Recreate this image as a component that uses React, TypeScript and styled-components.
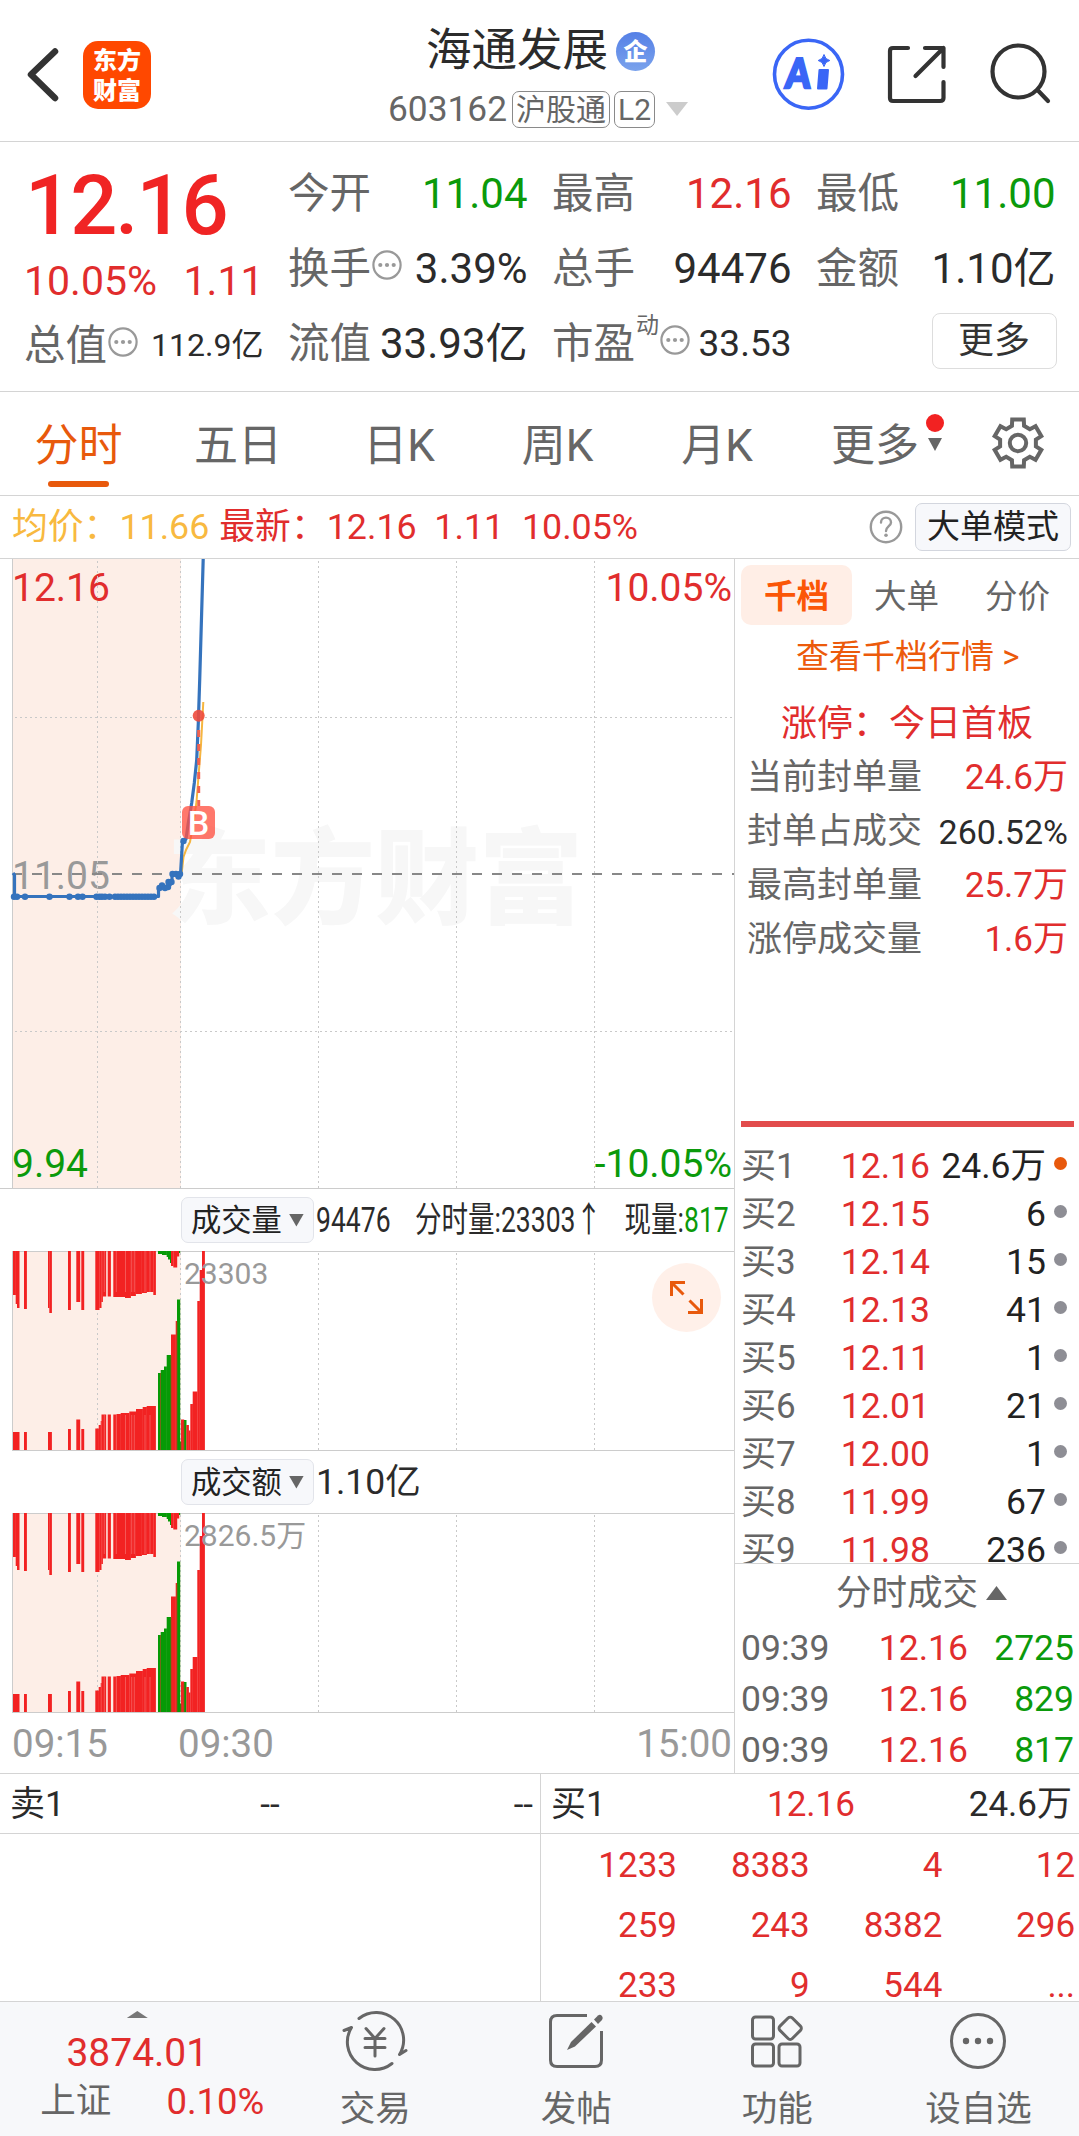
import React from 'react';
import styled, { createGlobalStyle } from 'styled-components';

const RED = '#e12d2d';
const GREEN = '#0b9a0b';
const DARK = '#2b2b2b';
const GRAY = '#666';
const LIGHT = '#999';
const LINE = '#d4d4d4';
const ORANGE = '#e8590c';

const Global = createGlobalStyle`
  * { box-sizing: border-box; }
  body {
    margin: 0;
    background: #fff;
    font-family: Roboto, "Noto Sans CJK SC", sans-serif;
    color: ${DARK};
  }
`;

const Page = styled.div`
  width: 1079px;
  height: 2136px;
  display: flex;
  flex-direction: column;
  overflow: hidden;
  background: #fff;
`;

const Text = styled.span<{ $size: number; $color?: string; $weight?: number; $ml?: number }>`
  font-size: ${p => p.$size}px;
  color: ${p => p.$color || DARK};
  font-weight: ${p => p.$weight || 400};
  margin-left: ${p => p.$ml || 0}px;
  line-height: inherit;
  white-space: pre;
`;

/* ---------- header ---------- */
const Header = styled.header`
  height: 142px;
  flex: none;
  border-bottom: 1px solid ${LINE};
  display: flex;
  align-items: flex-start;
`;
const HeadSide = styled.div`
  display: flex;
  width: 388px;
  height: 141px;
  padding-left: 24px;
`;
const HeadActions = styled.div`
  display: flex;
  margin-left: auto;
  width: 309px;
  height: 141px;
`;
const Logo = styled.div`
  width: 68px;
  height: 68px;
  margin: 41px 0 0 21px;
  border-radius: 15px;
  background: #ff4800;
  color: #fff;
  display: flex;
  flex-direction: column;
  align-items: center;
  padding-top: 3px;
  font: 900 24px/30px "Noto Sans CJK SC", sans-serif;
`;
const TitleBlock = styled.div`
  flex: none;
  width: 310px;
  display: flex;
  flex-direction: column;
`;
const TitleRow = styled.div`
  display: flex;
  align-items: center;
  height: 60px;
  margin-top: 21px;
  padding-left: 38px;
  line-height: 60px;
`;
const Badge = styled.span`
  width: 39px;
  height: 39px;
  margin-left: 8px;
  border-radius: 50%;
  background: linear-gradient(#5580e6, #7aa2ec);
  color: #fff;
  font: 900 24px/36px "Noto Sans CJK SC", sans-serif;
  text-align: center;
`;
const CodeRow = styled.div`
  display: flex;
  align-items: center;
  height: 38px;
  margin-top: 9px;
  line-height: 38px;
`;
const Tag = styled.span<{ $w: number; $ml: number }>`
  width: ${p => p.$w}px;
  margin-left: ${p => p.$ml}px;
  height: 37px;
  border: 1px solid #8a8a8a;
  border-radius: 7px;
  color: ${GRAY};
  font-size: 30px;
  line-height: 35px;
  text-align: center;
  white-space: nowrap;
`;
const Caret = styled.i<{ $w: number; $h: number; $c: string; $up?: boolean; $ml?: number }>`
  flex: none;
  width: ${p => p.$w}px;
  height: ${p => p.$h}px;
  margin-left: ${p => p.$ml || 0}px;
  background: ${p => p.$c};
  clip-path: ${p => (p.$up ? 'polygon(50% 0, 100% 100%, 0 100%)' : 'polygon(0 0, 100% 0, 50% 100%)')};
`;

/* ---------- quote ---------- */
const Quote = styled.section`
  height: 250px;
  flex: none;
  border-bottom: 1px solid ${LINE};
  padding: 14px 0 0 24px;
  display: grid;
  grid-template-columns: repeat(4, 239.5px);
  column-gap: 24.5px;
  align-items: start;
`;
const QuoteCol = styled.div`
  display: flex;
  flex-direction: column;
`;
const QuoteCell = styled.div<{ $h?: number }>`
  height: ${p => p.$h || 75}px;
  line-height: ${p => p.$h || 75}px;
  display: flex;
  justify-content: space-between;
  align-items: center;
`;
const BigPrice = styled.div`
  height: 98px;
  padding-left: 1px;
  font-size: 83px;
  font-weight: 500;
  line-height: 100px;
  color: #f02424;
  letter-spacing: -2px;
`;
const LabelGroup = styled.span`
  display: flex;
  align-items: center;
`;
const Sup = styled.span`
  font-size: 23px;
  line-height: 24px;
  color: ${GRAY};
  margin: -36px 0 0 1px;
`;
const MoreButton = styled.button`
  margin: 7px 0 0 auto;
  position: relative;
  left: 1px;
  align-self: flex-start;
  width: 125px;
  height: 56px;
  border: 1px solid #ddd;
  border-radius: 8px;
  background: #fff;
  font: 400 36px/52px Roboto, "Noto Sans CJK SC", sans-serif;
  color: #333;
  padding: 0;
`;

/* ---------- tabs ---------- */
const Tabs = styled.nav`
  height: 104px;
  flex: none;
  border-bottom: 1px solid ${LINE};
  display: flex;
`;
const Tab = styled.div<{ $w: number; $on?: boolean }>`
  width: ${p => p.$w}px;
  display: flex;
  flex-direction: column;
  align-items: center;
  font-size: 44px;
  line-height: 60px;
  padding-top: 24px;
  color: ${p => (p.$on ? ORANGE : GRAY)};
  &::after {
    content: '';
    width: 61px;
    height: 6px;
    margin-top: 5px;
    border-radius: 3px;
    background: ${p => (p.$on ? ORANGE : 'transparent')};
  }
`;
const TabMore = styled.div`
  width: 130px;
  margin-left: 33px;
  display: flex;
  font-size: 44px;
  line-height: 60px;
  padding-top: 24px;
  color: ${GRAY};
`;
const MoreMarks = styled.span`
  display: flex;
  flex-direction: column;
  align-items: center;
  gap: 6px;
  margin: -2px 0 0 7px;
`;
const RedDot = styled.i`
  width: 18px;
  height: 18px;
  border-radius: 50%;
  background: #f22222;
`;
const GearWrap = styled.div`
  margin: 24px 0 0 30px;
`;

/* ---------- info ---------- */
const InfoBar = styled.div`
  height: 63px;
  flex: none;
  border-bottom: 1px solid ${LINE};
  display: flex;
  align-items: center;
  padding: 0 8px 0 12px;
  line-height: 64px;
`;
const Spacer = styled.div`
  flex: 1;
`;
const ModeButton = styled.button`
  width: 156px;
  height: 48px;
  margin-left: 12px;
  border: 1px solid #d3d6de;
  border-radius: 7px;
  background: #f7f8fb;
  font: 400 33px/46px Roboto, "Noto Sans CJK SC", sans-serif;
  color: #222;
  padding: 0;
`;

/* ---------- main ---------- */
const Main = styled.div`
  display: flex;
  flex: none;
  height: 1215px;
  border-bottom: 1px solid ${LINE};
`;
const ChartCol = styled.div`
  width: 735px;
  flex: none;
  border-right: 1px solid ${LINE};
`;
const ChartBox = styled.div<{ $h: number }>`
  position: relative;
  height: ${p => p.$h}px;
  svg { display: block; }
`;
const Overlay = styled.span<{ $x?: number; $r?: number; $y: number; $size: number; $color: string }>`
  position: absolute;
  ${p => (p.$r !== undefined ? `right: ${p.$r}px;` : `left: ${p.$x}px;`)}
  top: ${p => p.$y - 25}px;
  line-height: 50px;
  font-size: ${p => p.$size}px;
  color: ${p => p.$color};
  white-space: nowrap;
`;
const Watermark = styled.span`
  position: absolute;
  left: 167px;
  top: 252px;
  font: 900 104px/120px "Noto Sans CJK SC", sans-serif;
  color: #f7f7f7;
`;
const BuyMark = styled.span`
  position: absolute;
  left: 182px;
  top: 247px;
  width: 33px;
  height: 33px;
  border-radius: 6px;
  background: rgba(255, 82, 66, 0.78);
  color: #fff;
  font-size: 34px;
  font-weight: 500;
  line-height: 35px;
  text-align: center;
`;
const ExpandButton = styled.button`
  position: absolute;
  left: 652px;
  top: 12px;
  width: 69px;
  height: 69px;
  padding: 0;
  border: 0;
  border-radius: 50%;
  background: #fff0e9;
`;
const SubHead = styled.div<{ $h: number }>`
  height: ${p => p.$h}px;
  padding: 0 0 0 181px;
  display: flex;
  align-items: center;
  line-height: ${p => p.$h + 1}px;
`;
const Selector = styled.div`
  flex: none;
  width: 133px;
  height: 46px;
  border: 1px solid #e2e4ea;
  border-radius: 7px;
  background: #f7f8fb;
  display: flex;
  align-items: center;
  gap: 7px;
  padding-left: 9px;
  font-size: 30.3px;
  line-height: 43px;
  color: #222;
`;
const Condensed = styled.div`
  flex: none;
  width: 546px;
  margin-left: 2px;
  display: flex;
  transform: scaleX(0.758);
  transform-origin: left center;
  font-size: 35px;
  white-space: pre;
`;
const CItem = styled.span<{ $w: number }>`
  width: ${p => p.$w}px;
  flex: none;
`;
const TimeAxis = styled.div`
  display: grid;
  grid-template-columns: 166px 1fr auto;
  padding: 0 2px 0 12px;
  height: 60px;
  line-height: 62px;
`;

/* ---------- side panel ---------- */
const Side = styled.aside`
  width: 344px;
  display: flex;
  flex-direction: column;
`;
const Pills = styled.div`
  display: flex;
  padding: 6px 0 0 6px;
`;
const Pill = styled.div<{ $on?: boolean; $w: number }>`
  width: ${p => p.$w}px;
  height: 60px;
  border-radius: 10px;
  background: ${p => (p.$on ? '#ffeee6' : 'transparent')};
  color: ${p => (p.$on ? '#fb5607' : GRAY)};
  font-size: 32.5px;
  font-weight: ${p => (p.$on ? 700 : 400)};
  line-height: 64px;
  text-align: center;
`;
const DepthLink = styled.div`
  height: 60px;
  line-height: 64px;
  padding-left: 61px;
  font-size: 33px;
  color: #ec5a0b;
  white-space: nowrap;
`;
const LimitTitle = styled.div`
  margin-top: 10px;
  height: 54px;
  line-height: 58px;
  font-size: 36px;
  color: ${RED};
  padding-left: 46px;
`;
const StatRow = styled.div`
  height: 54px;
  line-height: 58px;
  display: flex;
  justify-content: space-between;
  padding: 0 11px 0 12px;
`;
const RedBar = styled.div`
  height: 6px;
  flex: none;
  margin: 156px 5px 0 6px;
  background: #e24c4c;
`;
const Book = styled.div`
  height: 437px;
  flex: none;
  padding-top: 15px;
  overflow: hidden;
  border-bottom: 1px solid ${LINE};
`;
const BookRow = styled.div`
  height: 48px;
  line-height: 49px;
  display: grid;
  grid-template-columns: 70px 119px 116px 20px;
  padding-left: 6px;
  span:nth-child(n + 2) { text-align: right; }
`;
const Dot = styled.i<{ $on?: boolean }>`
  width: 13px;
  height: 13px;
  border-radius: 50%;
  margin: 15px 0 0 8px;
  background: ${p => (p.$on ? ORANGE : '#8e8e95')};
`;
const DealHead = styled.div`
  height: 58px;
  line-height: 59px;
  display: flex;
  align-items: center;
  padding-left: 101px;
  gap: 8px;
`;
const DealRow = styled.div`
  height: 51px;
  line-height: 53px;
  display: grid;
  grid-template-columns: 90px 137px 106px;
  padding-left: 6px;
  span:nth-child(n + 2) { text-align: right; }
`;

/* ---------- depth table ---------- */
const Depth = styled.div`
  height: 228px;
  flex: none;
  display: flex;
  border-bottom: 1px solid ${LINE};
`;
const DepthHalf = styled.div<{ $left?: boolean }>`
  width: ${p => (p.$left ? 541 : 538)}px;
  border-right: ${p => (p.$left ? `1px solid ${LINE}` : 'none')};
  overflow: hidden;
`;
const DepthHead = styled.div`
  height: 60px;
  line-height: 62px;
  border-bottom: 1px solid ${LINE};
  display: grid;
  grid-template-columns: 200px 120px 1fr;
  padding: 0 7px 0 10px;
  span:nth-child(2) { text-align: center; }
  span:nth-child(3) { text-align: right; }
`;
const DepthGrid = styled.div`
  display: grid;
  grid-template-columns: 136px repeat(3, 132.7px);
  grid-auto-rows: 60px;
  line-height: 63px;
  text-align: right;
`;

/* ---------- bottom nav ---------- */
const Nav = styled.footer`
  flex: 1;
  background: #f7f8fa;
  display: flex;
`;
const IndexBlock = styled.div`
  width: 275px;
  display: flex;
  flex-direction: column;
  align-items: center;
  padding-top: 9px;
`;
const IndexValue = styled.div`
  height: 46px;
  line-height: 46px;
  margin-top: 12px;
`;
const IndexRow = styled.div`
  width: 224px;
  height: 50px;
  line-height: 51px;
  display: flex;
  justify-content: space-between;
  margin-left: 30px;
`;
const NavItem = styled.div`
  width: 201.4px;
  padding-top: 8px;
  display: flex;
  flex-direction: column;
  align-items: center;
  line-height: 60px;
  svg { display: block; }
`;
const NavLabel = styled.span`
  margin-top: 7px;
  font-size: 35.5px;
  line-height: 60px;
  color: ${GRAY};
`;

const BackIcon = () => (
  <svg width="38" height="141" viewBox="24 0 38 141" fill="none">
    <path d="M55 51.5 L31 74.5 L55 98" stroke="#333" strokeWidth="6.5" strokeLinecap="round" strokeLinejoin="round" />
  </svg>
);

const HeadIcons = () => (
  <svg width="309" height="141" viewBox="770 0 309 141" fill="none">
    <circle cx="808.5" cy="74.3" r="34" stroke="#3a66f6" strokeWidth="3.6" />
    <g stroke="#333" strokeWidth="4.2" strokeLinecap="round" strokeLinejoin="round">
      <path d="M908 48 H893 Q890 48 890 51 V98 Q890 101 893 101 H940 Q943.5 101 943.5 98 V82" />
      <path d="M925 48 H943.5 V67 M943.5 48 L915.5 76" />
      <circle cx="1018.5" cy="71.5" r="26" />
      <path d="M1037.5 90 L1048 101" />
    </g>
    <path d="M824 54.5 Q825 59.5 829.8 60.5 Q825 61.5 824 66.5 Q823 61.5 818.2 60.5 Q823 59.5 824 54.5 Z" fill="#3a66f6" stroke="#3a66f6" strokeWidth="1" />
    <path d="M819.5 70 H828 L826.5 88.500 H818 Z" fill="#3a66f6" stroke="#3a66f6" strokeWidth="2" strokeLinejoin="round" />
  </svg>
);
const ActionsInner = styled.div`
  position: relative;
  width: 309px;
  height: 141px;
`;
const AiText = styled.span`
  position: absolute;
  left: 16px;
  top: 53px;
  font: 900 41px/40px Lato, sans-serif;
  color: #3a66f6;
  -webkit-text-stroke: 2.5px #3a66f6;
  transform: scaleX(0.86) skewX(-5deg);
  transform-origin: left center;
`;

const DotsIcon = () => (
  <svg width="30" height="30" viewBox="-15 -15 30 30" fill="none">
    <circle r="13.6" stroke="#999" strokeWidth="2.2" />
    <g fill="#999"><circle cx="-6.7" r="2.1" /><circle r="2.1" /><circle cx="6.7" r="2.1" /></g>
  </svg>
);
const InfoIcon = styled.span<{ $ml?: number }>`
  display: flex;
  margin: -7px 0 0 ${p => p.$ml || 0}px;
`;

const HelpIcon = () => (
  <svg width="34" height="34" viewBox="-17 -17 34 34" fill="none">
    <circle r="15.2" stroke="#999" strokeWidth="2.4" />
    <path d="M-5 -4.5 C-5 -11 5 -11 5 -4.5 C5 -1 0 -0.5 0 4" stroke="#999" strokeWidth="2.4" strokeLinecap="round" />
    <circle cy="8.3" r="1.8" fill="#999" />
  </svg>
);

const gearPath = (() => {
  const pts: string[] = [];
  for (let i = 0; i < 6; i++) {
    const a = (i * 60 - 90) * (Math.PI / 180);
    const at = (r: number, d: number) => `${(r * Math.cos(a + d)).toFixed(2)},${(r * Math.sin(a + d)).toFixed(2)}`;
    pts.push(at(18.2, -0.34), at(24.3, -0.24), at(24.3, 0.24), at(18.2, 0.34));
  }
  return `M${pts.join('L')}Z`;
})();
const GearIcon = () => (
  <svg width="54" height="54" viewBox="-27 -27 54 54" fill="none" stroke="#666" strokeWidth="4">
    <path d={gearPath} strokeLinejoin="miter" />
    <circle r="8.2" />
  </svg>
);

const TradeIcon = () => (
  <svg width="70" height="62" viewBox="-35 -31 70 62" fill="none" stroke="#666" strokeWidth="3" strokeLinecap="round" strokeLinejoin="round">
    <path d="M-16 -22.5 A27.5 27.5 0 0 1 24.5 13.5 L31 9.5" />
    <path d="M17 22.5 A27.5 27.5 0 0 1 -23.5 -13.5 L-31 -10.5" />
    <path d="M-9 -12.5 L0 -2.5 L9 -12.5 M-10 -2.5 H10 M-10 6.5 H10 M0 -2.5 V15" />
  </svg>
);
const PostIcon = () => (
  <svg width="58" height="62" viewBox="-29 -31 58 62" fill="none">
    <path d="M11 -25.5 H-19 Q-25.5 -25.5 -25.5 -19 V19 Q-25.5 25.5 -19 25.5 H19 Q25.5 25.5 25.5 19 V-10" stroke="#666" strokeWidth="3" />
    <path d="M-9 9 L-5 1 L15.5 -19 L20 -14.5 L-1 5.5 Z" fill="#666" />
    <path d="M18 -21.5 L22 -25.5 Q24 -27 26 -25 Q27.5 -23 26 -21 L22 -17 Z" fill="#666" />
  </svg>
);
const ToolsIcon = () => (
  <svg width="58" height="62" viewBox="-29 -31 58 62" fill="none" stroke="#666" strokeWidth="3">
    <rect x="-24.5" y="-24" width="21" height="22" rx="3" />
    <rect x="-24.5" y="3" width="21" height="22" rx="3" />
    <rect x="2" y="3" width="21" height="22" rx="3" />
    <rect x="4.5" y="-21.5" width="17.5" height="17.5" rx="3" transform="rotate(45 13.2 -12.8)" />
  </svg>
);
const MoreIcon = () => (
  <svg width="62" height="62" viewBox="-31 -31 62 62" fill="none">
    <circle r="26.5" stroke="#666" strokeWidth="3" />
    <g fill="#666"><circle cx="-12" r="3.2" /><circle r="3.2" /><circle cx="12" r="3.2" /></g>
  </svg>
);

/* ---------- charts ---------- */
const GRID_X = [97.5, 180.5, 318.5, 456.5, 594.5];

const GridV = ({ y1, y2 }: { y1: number; y2: number }) => (
  <g stroke="#c9c9c9" strokeWidth="1" strokeDasharray="2 3">
    {GRID_X.map(x => <line key={x} x1={x} x2={x} y1={y1} y2={y2} />)}
  </g>
);

const AUCTION_DOTS = [14, 17, 25, 49.5, 69.5, 78, 82.5, 96.5, 99.5, 102, 105, 109.5, 115, 118, 121, 124, 127, 130, 133, 136, 139, 142, 145, 148, 151, 154];

const PriceChart = () => (
  <svg width="734" height="629" viewBox="0 559 734 629" fill="none">
    <GridV y1={561} y2={1188} />
    <g stroke="#c9c9c9" strokeDasharray="2 3">
      <line x1="15" x2="734" y1="717.5" y2="717.5" />
      <line x1="15" x2="734" y1="1031.5" y2="1031.5" />
    </g>
    <line x1="12" x2="734" y1="874" y2="874" stroke="#888" strokeWidth="2" strokeDasharray="10 10" />
    <line x1="12.5" x2="12.5" y1="559" y2="1188" stroke="#ccc" />
    <path d="M181.7 873 L183.5 857 L186 850 L190 842 L193.5 822 L196.5 802 L199 770 L201 745 L203.3 702" stroke="#f5b53f" strokeWidth="2" />
    <path d="M13 873 L14.5 875 V896.5 H158.5 V888 H168 L172 882 V874 H180.5 L182.5 841 L186 839 L188.3 823 L191.7 803 L194.3 783 L196.7 760 L198.3 723 L199.7 680 L203.2 559" stroke="#3573bd" strokeWidth="3.2" strokeLinejoin="round" />
    <g fill="#3573bd">
      {AUCTION_DOTS.map(x => <circle key={x} cx={x} cy="896.7" r="3.2" />)}
      {[[159.5, 888], [162, 885.5], [165, 888], [168, 887], [168.5, 882], [171.5, 882], [172.5, 874], [176, 874], [178.5, 876.5], [180, 874], [183.5, 841]].map(([x, y]) => (
        <circle key={`${x}-${y}`} cx={x} cy={y} r="3.2" />
      ))}
    </g>
    <line x1="198.7" x2="198.7" y1="730" y2="806" stroke="#f2624f" strokeWidth="3" strokeDasharray="7 7" />
    <circle cx="198.7" cy="715.8" r="6" fill="#ee4a3c" fillOpacity="0.9" />
  </svg>
);

type Bar = [number, number, number, 'r' | 'g'];
const R = '#f22222';
const G = '#069a06';

// x start, x end, depth below the top edge
const TOP_BARS: Bar[] = [
  [13, 15.7, 44, 'r'], [15.7, 17, 53, 'r'], [17, 19.3, 57, 'r'], [24, 26.7, 58, 'r'], [48, 49.3, 57, 'r'], [49.3, 51.7, 62, 'r'],
  [68, 70.7, 59, 'r'], [76.3, 80, 51, 'r'], [81.3, 84, 59, 'r'], [95.3, 99.3, 59, 'r'], [99.3, 101.3, 57, 'r'], [101.3, 102.7, 51, 'r'],
  [102.7, 106, 45.5, 'r'], [107.7, 110.7, 45.5, 'r'], [113.3, 125, 46, 'r'], [125, 130.7, 47, 'r'], [130.7, 135.7, 45, 'r'], [135.7, 141.7, 43, 'r'],
  [141.7, 146.7, 42, 'r'], [146.7, 153.3, 41, 'r'], [153.3, 155.7, 44, 'r'], [158, 162, 3, 'g'], [162, 166.7, 4, 'g'], [166.7, 168, 6, 'g'],
  [168, 170, 8.5, 'g'], [170, 171, 12, 'g'], [171, 173.3, 15, 'r'], [173.3, 177, 16.5, 'r'], [177, 179, 5.5, 'r'], [179, 180, 2, 'g'],
];
// x start, x end, height above the bottom edge
const BASE_BARS: Bar[] = [
  [13, 19.3, 18, 'r'], [24, 26.7, 18, 'r'], [48, 51.7, 18, 'r'], [68, 70.7, 21, 'r'], [76.3, 80, 30.5, 'r'], [81.3, 84, 21, 'r'],
  [95.3, 98.7, 21.5, 'r'], [98.7, 100.7, 25, 'r'], [100.7, 101.5, 29, 'r'], [101.5, 106, 35.5, 'r'], [107.7, 110.7, 35.5, 'r'],
  [113.3, 116.7, 35.5, 'r'], [116.7, 120.7, 36, 'r'], [120.7, 129.3, 37, 'r'], [129.3, 136, 38.5, 'r'], [136, 142.7, 41, 'r'],
  [142.7, 146.7, 43, 'r'], [146.7, 155.7, 44, 'r'], [158, 160.7, 77, 'g'], [160.7, 164, 80, 'g'], [164, 166.7, 83.5, 'g'],
  [166.7, 171, 95, 'g'], [171, 175.7, 115.5, 'r'], [175.7, 177, 129, 'r'], [177, 180, 150.5, 'g'], [180, 181, 8.5, 'g'],
  [181, 184, 30.5, 'r'], [184, 186.3, 30, 'g'], [186.3, 188.7, 25, 'r'], [188.7, 190.3, 19.5, 'r'], [190.3, 192.7, 46, 'r'],
  [192.7, 197.3, 58.5, 'r'], [197.3, 199.7, 149, 'r'], [199.7, 202, 180, 'r'], [202, 204.7, 200, 'r'],
];
const AMOUNT_HEIGHTS: Record<number, number> = { 190.3: 43, 192.7: 55, 197.3: 142, 199.7: 176 };
const SEAMS = [104.3, 116.3, 125.5, 131.7, 134.3, 145, 150];

const BarChart = ({ amount }: { amount?: boolean }) => {
  const h = 200;
  return (
    <svg width="734" height={h} viewBox={`0 0 734 ${h}`} fill="none">
      <GridV y1={2} y2={h} />
      <line x1="12.5" x2="12.5" y1="0" y2={h} stroke="#ccc" />
      <line x1="12" x2="734" y1="0.5" y2="0.5" stroke="#ccc" />
      {TOP_BARS.map(([a, b, d, c], i) => <rect key={`t${i}`} x={a} y="0" width={b - a + 0.2} height={d} fill={c === 'r' ? R : G} />)}
      {BASE_BARS.map(([a, b, v, c], i) => {
        const height = (amount && AMOUNT_HEIGHTS[a]) || v;
        return <rect key={`b${i}`} x={a} y={h - 1 - height} width={b - a + 0.2} height={height} fill={c === 'r' ? R : G} />;
      })}
      <g stroke="#fff" strokeOpacity="0.3" strokeWidth="0.8">
        {SEAMS.map(x => <path key={x} d={`M${x} 0 V41 M${x} ${h - 36} V${h - 1}`} />)}
      </g>
      <g stroke="#8a5a1a" strokeOpacity="0.8" strokeWidth="1">
        <path d={`M177 ${h - 129} V${h - 1} M160.5 ${h - 78} V${h - 1} M171 ${h - 95} V${h - 1} M184 ${h - 30} V${h - 1} M181 ${h - 9} V${h - 1}`} />
      </g>
      <line x1="12" x2="734" y1={h - 0.5} y2={h - 0.5} stroke="#ccc" />
    </svg>
  );
};
const Auction = styled.i<{ $h: number }>`
  position: absolute;
  left: 13px;
  top: 0;
  width: 167.5px;
  height: ${p => p.$h}px;
  background: #fdeee7;
`;
const Layer = styled.div`
  position: relative;
`;
const PriceWrap = styled.div`
  height: 630px;
  border-bottom: 1px solid #ccc;
`;

const QuotePair = ({ label, value, color, extra, size = 42 }: { label: string; value: string; color?: string; extra?: React.ReactNode; size?: number }) => (
  <QuoteCell>
    <LabelGroup>
      <Text $size={41.5} $color={GRAY}>{label}</Text>
      {extra}
    </LabelGroup>
    <Text $size={size} $color={color || DARK}>{value}</Text>
  </QuoteCell>
);

const STATS: [string, string, string, number][] = [
  ['当前封单量', '24.6万', RED, 35],
  ['封单占成交', '260.52%', DARK, 34],
  ['最高封单量', '25.7万', RED, 35],
  ['涨停成交量', '1.6万', RED, 35],
];
const BOOK: [string, string][] = [
  ['12.16', '24.6万'], ['12.15', '6'], ['12.14', '15'], ['12.13', '41'], ['12.11', '1'],
  ['12.01', '21'], ['12.00', '1'], ['11.99', '67'], ['11.98', '236'],
];
const DEALS: [string, string, string][] = [
  ['09:39', '12.16', '2725'], ['09:39', '12.16', '829'], ['09:39', '12.16', '817'],
];
const QUEUE = ['1233', '8383', '4', '12', '259', '243', '8382', '296', '233', '9', '544', '...'];

export default function App() {
  return (
    <Page>
      <Global />
      <Header>
        <HeadSide>
          <BackIcon />
          <Logo><span>东方</span><span>财富</span></Logo>
        </HeadSide>
        <TitleBlock>
          <TitleRow>
            <Text $size={45.5}>海通发展</Text>
            <Badge>企</Badge>
          </TitleRow>
          <CodeRow>
            <Text $size={35.3} $color={GRAY}>603162</Text>
            <Tag $w={98} $ml={5}>沪股通</Tag>
            <Tag $w={41} $ml={4}>L2</Tag>
            <Caret $w={22} $h={14} $c="#ccc" $ml={11} />
          </CodeRow>
        </TitleBlock>
        <HeadActions>
          <ActionsInner>
            <HeadIcons />
            <AiText>A</AiText>
          </ActionsInner>
        </HeadActions>
      </Header>

      <Quote>
        <QuoteCol>
          <BigPrice>12.16</BigPrice>
          <QuoteCell $h={54}>
            <Text $size={41} $color={RED}>10.05%</Text>
            <Text $size={41} $color={RED}>1.11</Text>
          </QuoteCell>
          <QuotePair label="总值" value="112.9亿" size={32} extra={<InfoIcon $ml={1}><DotsIcon /></InfoIcon>} />
        </QuoteCol>
        <QuoteCol>
          <QuotePair label="今开" value="11.04" color={GREEN} />
          <QuotePair label="换手" value="3.39%" extra={<InfoIcon $ml={1}><DotsIcon /></InfoIcon>} />
          <QuotePair label="流值" value="33.93亿" />
        </QuoteCol>
        <QuoteCol>
          <QuotePair label="最高" value="12.16" color={RED} />
          <QuotePair label="总手" value="94476" />
          <QuotePair label="市盈" value="33.53" size={37} extra={<><Sup>动</Sup><InfoIcon $ml={1}><DotsIcon /></InfoIcon></>} />
        </QuoteCol>
        <QuoteCol>
          <QuotePair label="最低" value="11.00" color={GREEN} />
          <QuotePair label="金额" value="1.10亿" />
          <MoreButton>更多</MoreButton>
        </QuoteCol>
      </Quote>

      <Tabs>
        <Tab $w={157} $on>分时</Tab>
        <Tab $w={162}>五日</Tab>
        <Tab $w={160}>日K</Tab>
        <Tab $w={157}>周K</Tab>
        <Tab $w={162}>月K</Tab>
        <TabMore>
          更多
          <MoreMarks>
            <RedDot />
            <Caret $w={14} $h={13} $c="#666" />
          </MoreMarks>
        </TabMore>
        <GearWrap><GearIcon /></GearWrap>
      </Tabs>

      <InfoBar>
        <Text $size={35.8} $color="#f8b940">均价：11.66</Text>
        <Text $size={35.8} $color={RED} $ml={10}>最新：12.16  1.11  10.05%</Text>
        <Spacer />
        <HelpIcon />
        <ModeButton>大单模式</ModeButton>
      </InfoBar>

      <Main>
        <ChartCol>
          <PriceWrap>
            <ChartBox $h={629}>
              <Auction $h={629} />
              <Watermark>东方财富</Watermark>
              <Overlay $x={12} $y={29} $size={39} $color={RED}>12.16</Overlay>
              <Overlay $r={2} $y={29} $size={39} $color={RED}>10.05%</Overlay>
              <Overlay $x={12} $y={316.5} $size={39} $color={LIGHT}>11.05</Overlay>
              <Overlay $x={12} $y={604.5} $size={39} $color={GREEN}>9.94</Overlay>
              <Overlay $r={2} $y={604.5} $size={39} $color={GREEN}>-10.05%</Overlay>
              <Layer><PriceChart /></Layer>
              <BuyMark>B</BuyMark>
            </ChartBox>
          </PriceWrap>
          <SubHead $h={62}>
            <Selector>成交量<Caret $w={15} $h={13} $c="#666" /></Selector>
            <Condensed>
              <CItem $w={130.5}>94476</CItem>
              <CItem $w={276.5}>分时量:23303↑</CItem>
              <CItem $w={139}>现量:<Text $size={35} $color={GREEN}>817</Text></CItem>
            </Condensed>
          </SubHead>
          <ChartBox $h={200}>
            <Auction $h={200} />
            <Layer><BarChart /></Layer>
            <Overlay $x={184} $y={23} $size={30} $color={LIGHT}>23303</Overlay>
            <ExpandButton>
              <svg width="69" height="69" viewBox="0 0 69 69" fill="none" stroke={ORANGE} strokeWidth="3">
                <path d="M33 19.5 H19.5 V33 M20 20 L31.5 31.5" />
                <path d="M36 49.5 H49.5 V36 M49 49 L37.5 37.5" />
              </svg>
            </ExpandButton>
          </ChartBox>
          <SubHead $h={62}>
            <Selector>成交额<Caret $w={15} $h={13} $c="#666" /></Selector>
            <Text $size={35.5} $ml={2}>1.10亿</Text>
          </SubHead>
          <ChartBox $h={200}>
            <Auction $h={200} />
            <Layer><BarChart amount /></Layer>
            <Overlay $x={184} $y={23} $size={30} $color={LIGHT}>2826.5万</Overlay>
          </ChartBox>
          <TimeAxis>
            <Text $size={38.5} $color={LIGHT}>09:15</Text>
            <Text $size={38.5} $color={LIGHT}>09:30</Text>
            <Text $size={38.5} $color={LIGHT}>15:00</Text>
          </TimeAxis>
        </ChartCol>

        <Side>
          <Pills>
            <Pill $on $w={111}>千档</Pill>
            <Pill $w={109}>大单</Pill>
            <Pill $w={113}>分价</Pill>
          </Pills>
          <DepthLink>查看千档行情 &gt;</DepthLink>
          <LimitTitle>涨停：今日首板</LimitTitle>
          {STATS.map(([k, v, c, s]) => (
            <StatRow key={k}>
              <Text $size={35} $color={GRAY}>{k}</Text>
              <Text $size={s} $color={c}>{v}</Text>
            </StatRow>
          ))}
          <RedBar />
          <Book>
            {BOOK.map(([p, q], i) => (
              <BookRow key={p}>
                <Text $size={35} $color={GRAY}>买{i + 1}</Text>
                <Text $size={35.5} $color={RED}>{p}</Text>
                <Text $size={35.5} $color="#222">{q}</Text>
                <Dot $on={i === 0} />
              </BookRow>
            ))}
          </Book>
          <DealHead>
            <Text $size={35.5} $color={GRAY}>分时成交</Text>
            <Caret $w={21} $h={14} $c="#666" $up />
          </DealHead>
          {DEALS.map(([t, p, q]) => (
            <DealRow key={q}>
              <Text $size={35.5} $color={GRAY}>{t}</Text>
              <Text $size={35.5} $color={RED}>{p}</Text>
              <Text $size={35.5} $color={GREEN}>{q}</Text>
            </DealRow>
          ))}
        </Side>
      </Main>

      <Depth>
        <DepthHalf $left>
          <DepthHead>
            <Text $size={35}>卖1</Text>
            <Text $size={35}>--</Text>
            <Text $size={35}>--</Text>
          </DepthHead>
        </DepthHalf>
        <DepthHalf>
          <DepthHead>
            <Text $size={35}>买1</Text>
            <Text $size={35} $color={RED}>12.16</Text>
            <Text $size={35}>24.6万</Text>
          </DepthHead>
          <DepthGrid>
            {QUEUE.map(n => <Text key={n} $size={35} $color={RED}>{n}</Text>)}
          </DepthGrid>
        </DepthHalf>
      </Depth>

      <Nav>
        <IndexBlock>
          <Caret $w={21} $h={7} $c="#777" $up />
          <IndexValue><Text $size={39} $color={RED}>3874.01</Text></IndexValue>
          <IndexRow>
            <Text $size={35.5} $color={GRAY}>上证</Text>
            <Text $size={36.5} $color={RED}>0.10%</Text>
          </IndexRow>
        </IndexBlock>
        <NavItem><TradeIcon /><NavLabel>交易</NavLabel></NavItem>
        <NavItem><PostIcon /><NavLabel>发帖</NavLabel></NavItem>
        <NavItem><ToolsIcon /><NavLabel>功能</NavLabel></NavItem>
        <NavItem><MoreIcon /><NavLabel>设自选</NavLabel></NavItem>
      </Nav>
    </Page>
  );
}
